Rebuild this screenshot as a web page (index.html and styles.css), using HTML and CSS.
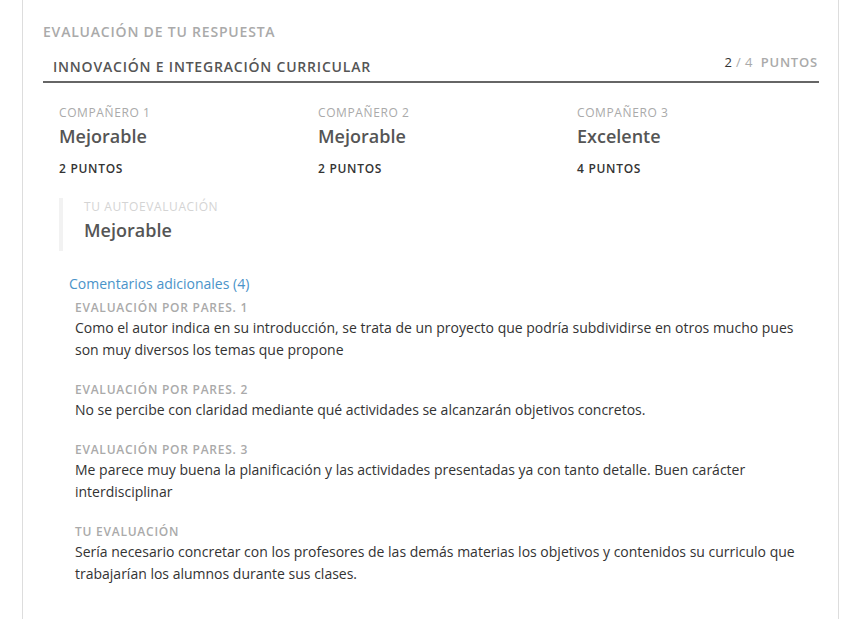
FILE: index.html
```html
<!DOCTYPE html>
<html lang="es">
<head>
  <meta charset="UTF-8" />
  <meta name="viewport" content="width=device-width, initial-scale=1.0"/>
  <title>Evaluación de tu respuesta</title>
  <link rel="stylesheet" href="styles.css">
</head>
<body>
  <div class="panel">
    <h3 class="section-title">Evaluación de tu respuesta</h3>

    <div class="criterion-head">
      <h4>Innovación e integración curricular</h4>
      <div class="score"><span class="got">2</span> / 4 <span class="unit">Puntos</span></div>
    </div>

    <div class="peers">
      <div class="peer">
        <div class="peer-label">Compañero 1</div>
        <div class="peer-grade">Mejorable</div>
        <div class="peer-points">2 Puntos</div>
      </div>
      <div class="peer">
        <div class="peer-label">Compañero 2</div>
        <div class="peer-grade">Mejorable</div>
        <div class="peer-points">2 Puntos</div>
      </div>
      <div class="peer">
        <div class="peer-label">Compañero 3</div>
        <div class="peer-grade">Excelente</div>
        <div class="peer-points">4 Puntos</div>
      </div>
    </div>

    <div class="self-eval">
      <div class="self-label">Tu autoevaluación</div>
      <div class="peer-grade">Mejorable</div>
    </div>

    <div class="comments">
      <a class="comments-toggle" href="#">Comentarios adicionales (4)</a>
      <ul class="comment-list">
        <li>
          <div class="comment-label">Evaluación por pares. 1</div>
          <p>Como el autor indica en su introducción, se trata de un proyecto que podría subdividirse en otros mucho pues son muy diversos los temas que propone</p>
        </li>
        <li>
          <div class="comment-label">Evaluación por pares. 2</div>
          <p>No se percibe con claridad mediante qué actividades se alcanzarán objetivos concretos.</p>
        </li>
        <li>
          <div class="comment-label">Evaluación por pares. 3</div>
          <p>Me parece muy buena la planificación y las actividades presentadas ya con tanto detalle. Buen carácter interdisciplinar</p>
        </li>
        <li>
          <div class="comment-label">Tu evaluación</div>
          <p>Sería necesario concretar con los profesores de las demás materias los objetivos y contenidos su curriculo que trabajarían los alumnos durante sus clases.</p>
        </li>
      </ul>
    </div>
  </div>
</body>
</html>
```

FILE: styles.css
```css
body {
  margin: 0;
  font-family: 'Open Sans', sans-serif;
  background-color: #fff;
  color: #333;
}

.panel {
  margin-left: 22px;
  width: 817px;
  min-height: 619px;
  box-sizing: border-box;
  padding: 22px 19px 0 20px;
  border-left: 1px solid #ddd;
  border-right: 1px solid #ddd;
}

.section-title {
  margin: 0;
  font-size: 14px;
  font-weight: 600;
  line-height: 20px;
  letter-spacing: 0.8px;
  text-transform: uppercase;
  color: #aaa;
}

.criterion-head {
  display: flex;
  justify-content: space-between;
  align-items: flex-start;
  margin-top: 10px;
  padding: 0 1px 0 10px;
  border-bottom: 2px solid #666;
}

.criterion-head h4 {
  margin: 0;
  padding-top: 5px;
  padding-bottom: 4px;
  font-size: 14px;
  font-weight: 600;
  line-height: 20px;
  letter-spacing: 0.8px;
  text-transform: uppercase;
  color: #555;
}

.score {
  font-size: 13px;
  line-height: 20px;
  letter-spacing: 0.4px;
  color: #aaa;
}

.score .got {
  color: #333;
}

.score .unit {
  margin-left: 4px;
  font-weight: 600;
  letter-spacing: 0.8px;
  text-transform: uppercase;
}

.peers {
  display: grid;
  grid-template-columns: repeat(3, 259px);
  padding: 21px 0 0 16px;
}

.peer-label {
  font-size: 12px;
  line-height: 18px;
  letter-spacing: 0.6px;
  text-transform: uppercase;
  color: #aaa;
}

.peer-grade {
  margin-top: 1px;
  font-size: 18px;
  font-weight: 600;
  line-height: 26px;
  color: #555;
}

.peer-points {
  margin-top: 11px;
  font-size: 12px;
  font-weight: 600;
  line-height: 18px;
  letter-spacing: 0.7px;
  text-transform: uppercase;
  color: #333;
}

.self-eval {
  margin: 20px 0 0 16px;
  padding: 0 0 8px 21px;
  border-left: 4px solid #f2f2f2;
}

.self-label {
  font-size: 12px;
  line-height: 18px;
  letter-spacing: 0.6px;
  text-transform: uppercase;
  color: #d4d4d4;
}

.comments {
  margin: 21px 0 0 26px;
}

.comments-toggle {
  font-size: 14px;
  line-height: 20px;
  color: #4a93c9;
  text-decoration: none;
}

.comment-list {
  list-style: none;
  margin: 5px 0 0;
  padding: 0 0 0 6px;
}

.comment-list li {
  margin-bottom: 20px;
}

.comment-label {
  font-size: 12px;
  font-weight: 600;
  line-height: 18px;
  letter-spacing: 0.75px;
  text-transform: uppercase;
  color: #aaa;
}

.comment-list p {
  margin: 0;
  font-size: 14px;
  line-height: 22px;
  color: #333;
}
```
